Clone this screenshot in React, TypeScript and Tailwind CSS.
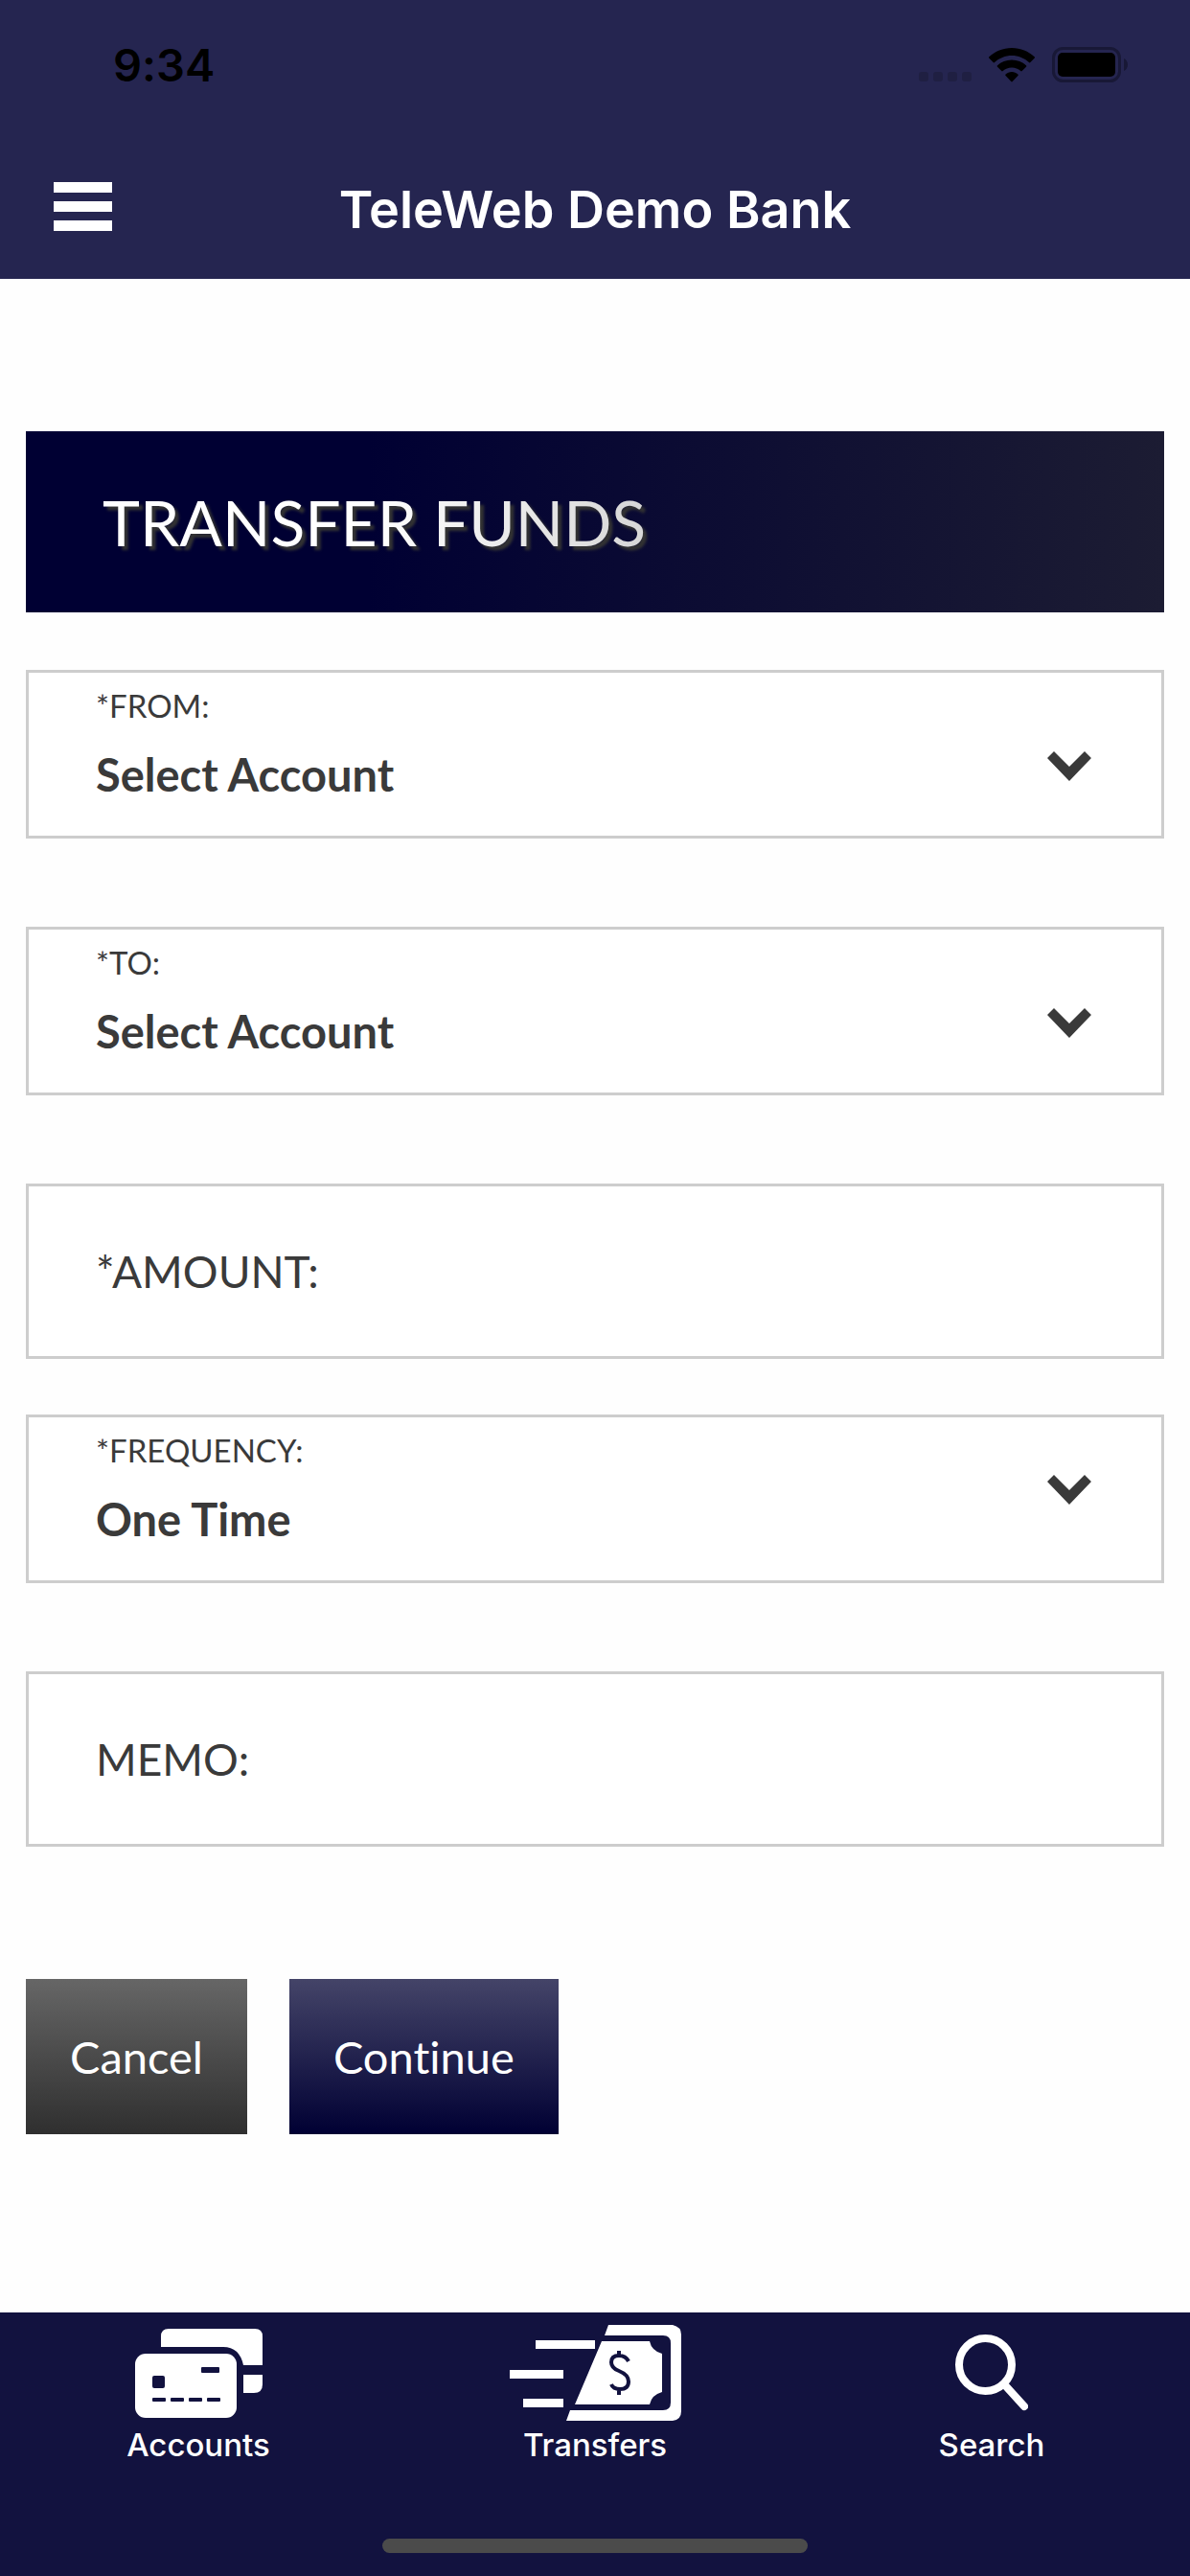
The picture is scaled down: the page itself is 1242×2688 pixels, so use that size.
import { useState } from "react";
import type { ReactNode } from "react";

interface SelectFieldProps {
  id: string;
  label: string;
  options: string[];
  raised?: boolean;
}

interface TextFieldProps {
  id: string;
  label: string;
  inputMode?: "decimal" | "text";
}

interface TabProps {
  href: string;
  label: string;
  children: ReactNode;
}

const accountOptions = ["Select Account"];
const frequencyOptions = ["One Time"];

const StatusBar = () => (
  <div className="flex h-[135px] items-center justify-between pl-[118px] pr-16 text-black">
    <time className="font-['Inter',sans-serif] text-[47px] font-semibold leading-[60px]">
      9:34
    </time>
    <div className="flex items-center gap-[18px]">
      <div className="flex gap-[5px] pt-6">
        <span className="h-[10px] w-[10px] rounded-[3px] bg-[#1f1f42]" />
        <span className="h-[10px] w-[10px] rounded-[3px] bg-[#1f1f42]" />
        <span className="h-[10px] w-[10px] rounded-[3px] bg-[#1f1f42]" />
        <span className="h-[10px] w-[10px] rounded-[3px] bg-[#1f1f42]" />
      </div>
      <svg viewBox="0 0 48 36" className="h-9 w-12" fill="currentColor" aria-hidden="true">
        <path d="M24 0C14.800 0 6.500 3.500.400 9.300a1 1 0 0 0 0 1.500l4.200 4.200a1 1 0 0 0 1.500 0C10.800 10.700 17.100 8 24 8s13.200 2.700 17.900 7a1 1 0 0 0 1.500 0l4.200-4.200a1 1 0 0 0 0-1.500C41.500 3.500 33.200 0 24 0z" />
        <path d="M24 12.500c-5.800 0-11 2.200-15 5.800a1 1 0 0 0 0 1.500l4.300 4.300a1 1 0 0 0 1.400 0c2.500-2.200 5.800-3.500 9.300-3.500s6.800 1.300 9.300 3.500a1 1 0 0 0 1.400 0l4.300-4.300a1 1 0 0 0 0-1.500c-4-3.600-9.200-5.800-15-5.800z" />
        <path d="M24 25c-2.500 0-4.700.900-6.400 2.400a1 1 0 0 0 0 1.500l5.700 6.200a1 1 0 0 0 1.400 0l5.700-6.200a1 1 0 0 0 0-1.500C28.700 25.900 26.500 25 24 25z" />
      </svg>
      <svg viewBox="0 0 80 37" className="h-[37px] w-20" aria-hidden="true">
        <rect x="1.500" y="1.500" width="69" height="34" rx="10" fill="none" stroke="#181836" strokeWidth="3" />
        <rect x="6" y="6" width="60" height="25" rx="5" fill="black" />
        <path d="M75 12c2.500 1.200 4 3.600 4 6.500s-1.500 5.300-4 6.500z" fill="#181836" />
      </svg>
    </div>
  </div>
);

const SelectField = ({ id, label, options, raised = false }: SelectFieldProps) => (
  <div className="relative h-44 border-[3px] border-[#cdcdcd] bg-white">
    <label
      htmlFor={id}
      className="block px-[70px] pt-[14px] text-[33px] leading-[40px]"
    >
      {label}
    </label>
    <select
      id={id}
      className="w-full appearance-none bg-transparent px-[70px] pt-[22px] text-[47px] font-bold leading-[60px] outline-none"
    >
      {options.map((option) => (
        <option key={option}>{option}</option>
      ))}
    </select>
    <svg
      viewBox="0 0 46 31"
      className={
        raised
          ? "pointer-events-none absolute right-[73px] top-[60px] h-[31px] w-[46px]"
          : "pointer-events-none absolute right-[73px] top-[82px] h-[31px] w-[46px]"
      }
      fill="currentColor"
      aria-hidden="true"
    >
      <path d="M0 7 7 0l16 16L39 0l7 7-23 24z" />
    </svg>
  </div>
);

const TextField = ({ id, label, inputMode = "text" }: TextFieldProps) => (
  <div className="flex h-[183px] items-center gap-4 border-[3px] border-[#cdcdcd] bg-white px-[70px] text-[46px] leading-[60px]">
    <label htmlFor={id}>{label}</label>
    <input
      id={id}
      type="text"
      inputMode={inputMode}
      className="min-w-0 flex-1 bg-transparent outline-none"
    />
  </div>
);

const Tab = ({ href, label, children }: TabProps) => (
  <a href={href} className="flex flex-1 flex-col items-center text-white">
    <span className="flex h-[116px] items-center justify-center pt-[10px]">
      {children}
    </span>
    <span className="font-['Inter',sans-serif] text-[33px] font-medium leading-[44px]">
      {label}
    </span>
  </a>
);

const AccountsIcon = () => (
  <svg viewBox="0 0 133 93" className="h-[93px] w-[133px]" fill="white" aria-hidden="true">
    <path d="M27 19V8q0-8 8-8h90q8 0 8 8v30h-20q-4-19-21-19z" />
    <path d="M113 48h20v10q0 9-9 9h-11z" />
    <rect y="26" width="106" height="67" rx="11" />
    <g fill="#12123f">
      <rect x="18" y="49" width="13" height="13" rx="2" />
      <rect x="69" y="40" width="19" height="6" rx="1" />
      <rect x="18" y="72" width="14" height="4" rx="1" />
      <rect x="37" y="72" width="14" height="4" rx="1" />
      <rect x="56" y="72" width="14" height="4" rx="1" />
      <rect x="75" y="72" width="14" height="4" rx="1" />
    </g>
  </svg>
);

const TransfersIcon = () => (
  <svg viewBox="0 0 179 100" className="h-[100px] w-[179px]" fill="white" aria-hidden="true">
    <path d="M27 16h62v9H27zM0 47h56v9H0zM14 77h42v9H14z" />
    <path d="M103 0h67q9 2 9 10v80q0 9-9 10H59l4-11h97q8 0 8-8V19q0-8-8-8H99z" />
    <path d="M96 17h50q2 10 13 13v40q-11 3-13 13H68z" />
    <path
      d="M124 38q-3-6-10-6-8 0-8 7 0 6 8 9 10 4 10 11 0 8-9 8-7 0-9-5M114 27v6M114 66v7"
      fill="none"
      stroke="#12123f"
      strokeWidth="4"
    />
  </svg>
);

const SearchIcon = () => (
  <svg
    viewBox="0 0 76 80"
    className="h-20 w-[76px]"
    fill="none"
    stroke="white"
    strokeLinecap="round"
    aria-hidden="true"
  >
    <circle cx="31.500" cy="31.500" r="27.500" strokeWidth="8" />
    <path d="m52 53 20 22" strokeWidth="8" />
  </svg>
);

const App = () => {
  const [menuOpen, setMenuOpen] = useState(false);

  return (
    <div className="flex min-h-screen flex-col bg-[#fefefe] font-['Lato',sans-serif] text-[#3a3a3a] [font-variant-ligatures:none]">
      <header className="bg-[#252550]">
        <StatusBar />
        <div className="grid h-[156px] grid-cols-[1fr_auto_1fr] items-center px-14 pt-1">
          <button
            type="button"
            aria-label="Menu"
            aria-expanded={menuOpen}
            onClick={() => setMenuOpen(!menuOpen)}
            className="flex w-[61px] flex-col gap-[9px]"
          >
            <span className="h-[11px] bg-white" />
            <span className="h-[11px] bg-white" />
            <span className="h-[11px] bg-white" />
          </button>
          <p className="pt-2 font-['Inter',sans-serif] text-[54px] font-semibold leading-[64px] text-white">
            TeleWeb Demo Bank
          </p>
        </div>
      </header>

      <main className="flex-1 px-[27px] pt-[159px]">
        <h1 className="relative bg-[#000033] px-20 py-[54px] text-[66px] leading-[81px] text-white [text-shadow:4px_4px_3px_#333333] after:absolute after:inset-0 after:bg-linear-to-r/srgb after:from-[#33333300] after:from-30% after:via-[#33333348] after:via-65% after:to-[#3333338c] after:content-['']">
          TRANSFER FUNDS
        </h1>

        <form className="pt-[60px]" onSubmit={(e) => e.preventDefault()}>
          <div className="flex flex-col gap-[92px]">
            <SelectField id="from" label="*FROM:" options={accountOptions} />
            <SelectField id="to" label="*TO:" options={accountOptions} />
            <div className="flex flex-col gap-[58px]">
              <TextField id="amount" label="*AMOUNT:" inputMode="decimal" />
              <SelectField
                id="frequency"
                label="*FREQUENCY:"
                options={frequencyOptions}
                raised
              />
            </div>
            <TextField id="memo" label="MEMO:" />
          </div>

          <div className="flex gap-11 pt-[138px] text-[47px] leading-[60px] text-white">
            <button
              type="button"
              className="bg-linear-to-b/srgb from-[#666666] to-[#2f2f2f] px-[46px] py-[51px]"
            >
              Cancel
            </button>
            <button
              type="submit"
              className="bg-linear-to-b/srgb from-[#444468] to-[#000033] px-[46px] py-[51px]"
            >
              Continue
            </button>
          </div>
        </form>
      </main>

      <footer className="bg-[#12123f]">
        <nav className="flex">
          <Tab href="#accounts" label="Accounts">
            <AccountsIcon />
          </Tab>
          <Tab href="#transfers" label="Transfers">
            <TransfersIcon />
          </Tab>
          <Tab href="#search" label="Search">
            <SearchIcon />
          </Tab>
        </nav>
        <div className="flex justify-center pb-6 pt-[76px]">
          <div className="h-[15px] w-[444px] rounded-full bg-[#4b4b4b]" />
        </div>
      </footer>
    </div>
  );
};

export default App;
